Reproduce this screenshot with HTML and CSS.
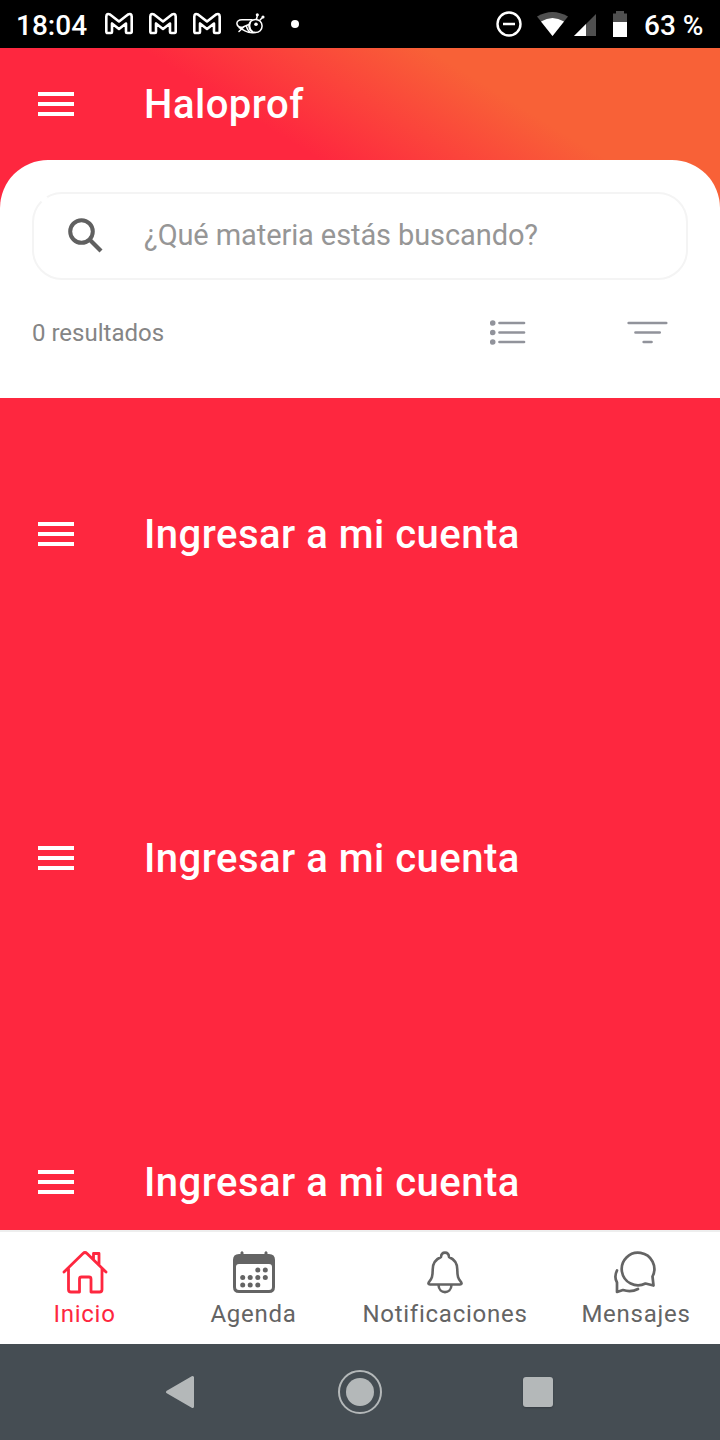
FILE: index.html
```html
<!DOCTYPE html>
<html lang="es">
<head>
<meta charset="utf-8">
<title>Haloprof</title>
<link rel="stylesheet" href="styles.css">
</head>
<body>
<svg class="defs" width="0" height="0">
  <symbol id="mail" viewBox="0 0 30 24"><path d="M2.300 4.500Q2.500 1 6 2.500L15 9.500L24 2.500Q27.500 1 27.700 4.500V19.500Q27.700 21 26.500 21H23Q22 21 22 20V11.500L15 17L8 11.500V20Q8 21 7 21H3.500Q2.300 21 2.300 19.500Z" fill="none" stroke="#fff" stroke-width="2.600" stroke-linejoin="round"/></symbol>
  <symbol id="menu" viewBox="0 0 36 24"><path d="M0 2H36M0 12H36M0 22H36" stroke="#fff" stroke-width="4"/></symbol>
</svg>
<div class="screen">
  <div class="status">
    <span class="clock">18:04</span>
    <div class="notices">
      <svg width="30" height="24"><use href="#mail"/></svg>
      <svg width="30" height="24"><use href="#mail"/></svg>
      <svg width="30" height="24"><use href="#mail"/></svg>
      <svg class="bee" width="32" height="26" viewBox="0 0 32 26" fill="none" stroke="#fff" stroke-width="1.500" stroke-linecap="round">
        <circle cx="20.500" cy="15" r="6.600"/><path d="M17 8.800H7C3.500 8.800 1.500 10.500 2 13C2.500 15.500 5 16.500 8 16L14 13.500M9 15.800L4 20.500M4 16.500L10 19.800C13 21.500 17 22 20 21.500M11.500 15Q12 19 15 21M15.500 11Q13 17 17.500 20.500M21.500 8L22.500 4M25 9L27.500 6.500"/>
        <circle cx="21" cy="13.300" r="1.800" fill="#fff" stroke="none"/><circle cx="22.300" cy="3.800" r=".8" fill="#fff"/><circle cx="28" cy="6" r=".8" fill="#fff"/>
      </svg>
      <i class="dot"></i>
    </div>
    <svg class="system" width="136" height="32" viewBox="0 0 136 32">
      <circle cx="13" cy="16" r="11.500" fill="none" stroke="#fff" stroke-width="2.400"/><path d="M7 16H19" stroke="#fff" stroke-width="2.500"/>
      <path d="M41 8.500Q56.500-.5 72 8.500L56.500 28Z" fill="#505050"/><path d="M45 13.500Q56.500 6.500 68 13.500L56.500 28Z" fill="#fff"/>
      <path d="M78 28L100 6V28Z" fill="#505050"/><path d="M78 28L90 16V28Z" fill="#fff"/>
      <path d="M117 5.500H120V3H128V5.500H131V14H117Z" fill="#505050"/><path d="M117 14H131V29H117Z" fill="#fff"/>
    </svg>
    <span class="percent">63 %</span>
  </div>
  <header class="top">
    <div class="bar"><svg width="36" height="24"><use href="#menu"/></svg><h1>Haloprof</h1></div>
    <section class="panel">
      <div class="search">
        <svg width="36" height="36" viewBox="0 0 36 36" fill="none" stroke="#606060"><circle cx="14.500" cy="13.500" r="11.300" stroke-width="4"/><path d="M22.500 21.500L34 33" stroke-width="4.200"/></svg>
        <span>¿Qué materia estás buscando?</span>
      </div>
      <div class="results">
        <span>0 resultados</span>
        <svg class="list" width="36" height="26" viewBox="0 0 36 26" stroke="#91939b" stroke-width="2.700" stroke-linecap="round"><path d="M9.500 4H34M9.500 13.500H34M9.500 23H34"/><g fill="#91939b" stroke="none"><circle cx="2.700" cy="4" r="2.800"/><circle cx="2.700" cy="13.500" r="2.800"/><circle cx="2.700" cy="23" r="2.800"/></g></svg>
        <svg class="filter" width="42" height="26" viewBox="0 0 42 26" stroke="#91939b" stroke-width="2.700" stroke-linecap="round"><path d="M2.700 4H40.200M9.500 13.500H33.700M17.700 23H25.500"/></svg>
      </div>
    </section>
  </header>
  <main class="accounts">
    <div class="bar"><svg width="36" height="24"><use href="#menu"/></svg><h2>Ingresar a mi cuenta</h2></div>
    <div class="bar"><svg width="36" height="24"><use href="#menu"/></svg><h2>Ingresar a mi cuenta</h2></div>
    <div class="bar"><svg width="36" height="24"><use href="#menu"/></svg><h2>Ingresar a mi cuenta</h2></div>
  </main>
  <nav class="tabs">
    <a class="tab active">
      <svg width="46" height="44" viewBox="0 0 46 44" fill="none" stroke="currentColor" stroke-width="2.800" stroke-linecap="round" stroke-linejoin="round"><path d="M2 21L21 2.500Q23 .5 25 2.500L44 21M6.500 17.500V38.500Q6.500 41 9 41H17.500V28Q17.500 26 19.500 26H27Q29 26 29 28V41H37.500Q40 41 40 38.500V17.500M31.500 8V2.500H37V13.500"/></svg>
      <span>Inicio</span>
    </a>
    <a class="tab">
      <svg width="46" height="44" viewBox="0 0 46 44"><path fill="currentColor" fill-rule="evenodd" d="M8 3H9.500V1.500Q11-1 12.500 1.500V3H33.500V1.500Q35-1 36.500 1.500V3H38Q44 3 44 9V36Q44 42 38 42H8Q2 42 2 36V9Q2 3 8 3ZM8 13Q5 13 5 16V36Q5 39 8 39H38Q41 39 41 36V16Q41 13 38 13Z"/><g fill="currentColor"><circle cx="26.800" cy="19" r="2.500"/><circle cx="34.300" cy="19" r="2.500"/><circle cx="11.700" cy="26.500" r="2.500"/><circle cx="19.200" cy="26.500" r="2.500"/><circle cx="26.800" cy="26.500" r="2.500"/><circle cx="34.300" cy="26.500" r="2.500"/><circle cx="11.700" cy="34" r="2.500"/><circle cx="19.200" cy="34" r="2.500"/><circle cx="26.800" cy="34" r="2.500"/></g></svg>
      <span>Agenda</span>
    </a>
    <a class="tab">
      <svg width="46" height="44" viewBox="0 0 46 44" fill="none" stroke="currentColor" stroke-width="2.600" stroke-linejoin="round"><path d="M19 6C19.500 .2 26.500 .2 27 6C33 8.500 35.300 12.500 35.300 18.500C35.300 26.500 36.500 27.500 39 31Q40.500 33.500 38 33.500H8Q5.500 33.500 7 31C9.500 27.500 10.700 26.500 10.700 18.500C10.700 12.500 13 8.500 19 6ZM16.500 34C17 43.500 29 43.500 29.500 34"/></svg>
      <span>Notificaciones</span>
    </a>
    <a class="tab">
      <svg width="46" height="44" viewBox="0 0 46 44" fill="none" stroke="currentColor" stroke-width="2.700" stroke-linecap="round" stroke-linejoin="round"><path d="M39.500 25.500A16.300 16.300 0 1 0 32.500 32.500L40.500 34.500ZM4 19.500Q.8 26 4 31.500V41L10 39Q18 41.500 25 38"/></svg>
      <span>Mensajes</span>
    </a>
  </nav>
  <footer class="system-nav">
    <svg width="32" height="36" viewBox="0 0 32 36"><path d="M3.500 18L28.500 3.500V32.500Z" fill="#b4b8b9" stroke="#b4b8b9" stroke-width="3" stroke-linejoin="round"/></svg>
    <i class="home"></i>
    <i class="recent"></i>
  </footer>
</div>
</body>
</html>
```

FILE: styles.css
```css
* { box-sizing: border-box; }
body { margin: 0; font-family: Roboto, "Liberation Sans", sans-serif; }
svg { display: block; flex: none; }
.defs { position: absolute; }
.screen { width: 720px; height: 1440px; display: flex; flex-direction: column; overflow: hidden; }
.status { height: 48px; flex: none; display: flex; align-items: center; background: #000; color: #fff; padding: 3px 16px 0; font-size: 28px; font-weight: 500; white-space: nowrap; }
.clock { width: 88px; }
.notices { display: flex; align-items: center; gap: 14px; margin-top: -3px; }
.bee { margin-left: -1px; }
.dot { width: 8px; height: 8px; border-radius: 50%; background: #fff; margin-left: 10px; }
.system { margin: -3px 0 0 auto; }
.percent { width: 72px; padding-left: 12px; }
.top { height: 350px; flex: none; background: linear-gradient(31.7deg, #fe273f 209px, #f86137 360px) no-repeat 0 0 / 720px 160px; }
.bar { height: 112px; display: flex; align-items: center; padding-left: 38px; gap: 70px; color: #fff; }
.bar h1, .bar h2 { margin: 0; padding-top: 2px; font-size: 40px; line-height: 48px; font-weight: 500; letter-spacing: .5px; white-space: nowrap; }
.panel { height: 238px; background: #fff; border-radius: 48px 48px 0 0; padding: 32px 32px 0; }
.search { position: relative; height: 88px; border: 2px solid #f4f4f4; border-radius: 30px; display: flex; align-items: center; gap: 41px; padding-left: 33px; font-size: 29px; letter-spacing: -.1px; color: #969696; }
.search::before { content: ""; position: absolute; left: 7px; top: 1px; width: 5px; height: 7px; background: #fff; transform: rotate(45deg); }
.search span { margin-top: -2px; }
.results { height: 104px; display: flex; align-items: center; color: #858585; font-size: 24px; }
.results span { width: 458px; padding-top: 2px; }
.filter { margin-left: 100px; }
.accounts { height: 832px; flex: none; overflow: hidden; background: #fe273f; padding-top: 80px; display: flex; flex-direction: column; gap: 212px; }
.accounts .bar { flex: none; }
.tabs { height: 114px; flex: none; display: grid; grid-template-columns: 169px 169px 214px 168px; background: #fff; border-top: 2px solid #eee; color: #646464; }
.tab { display: flex; flex-direction: column; align-items: center; padding-top: 19px; font-size: 24px; line-height: 28px; letter-spacing: .75px; }
.tab span { margin-top: 5px; }
.active { color: #fe273f; }
.system-nav { height: 96px; flex: none; background: #454d53; display: flex; align-items: center; padding-left: 164px; }
.home { width: 44px; height: 44px; border: 2px solid #b4b8b9; border-radius: 50%; padding: 6px; background: #b4b8b9 content-box; margin-left: 142px; }
.recent { width: 30px; height: 30px; border-radius: 3px; background: #b4b8b9; margin-left: 141px; box-shadow: 0 1px 2px #343b40; }
```
